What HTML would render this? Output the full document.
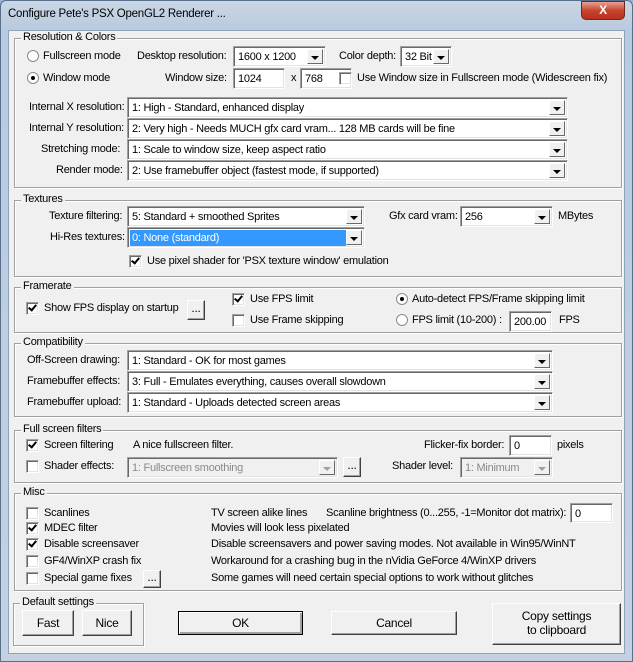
<!DOCTYPE html>
<html><head><meta charset="utf-8"><style>
*{box-sizing:border-box;margin:0;padding:0}
body{width:633px;height:662px;overflow:hidden;background:#9fb4cc;font-family:"Liberation Sans",sans-serif;font-size:11px;letter-spacing:-0.25px;color:#000;position:relative}
.a{position:absolute;white-space:nowrap}
#frame{position:absolute;left:0;top:0;width:633px;height:662px;background:linear-gradient(#c9d6e5,#b9cadf 30px,#c3d1e2);border:1px solid #58708c;border-radius:6px 6px 0 0}
#client{position:absolute;left:8px;top:30px;width:617px;height:624px;background:#f0f0f0;border:1px solid #8ea2ba}
.title{left:8px;top:8px;font-size:11.5px;color:#000}
.close{left:581px;top:1px;width:44px;height:19px;border-radius:0 0 5px 5px;background:linear-gradient(#e8a193,#c7452f 50%,#b8301c);border:1px solid #6b2a22;color:#fff;font-weight:bold;text-align:center;font-size:12px;line-height:17px}
.g{position:absolute;border:1px solid #a0a0a0;box-shadow:1px 1px 0 #fff inset,1px 1px 0 #fff}
.gl{position:absolute;background:#f0f0f0;padding:0 2px;top:-8px;left:6px;white-space:nowrap}
.cb{position:absolute;background:#fff;border:1px solid;border-color:#a0a0a0 #fff #fff #a0a0a0;box-shadow:inset 1px 1px 0 #696969,inset -1px -1px 0 #e3e3e3;padding:4px 0 0 4px;white-space:nowrap;overflow:hidden}
.cb.dis{background:#f0f0f0;color:#8a8a8a}
.cb.sel span{background:#3399ff;color:#fff;display:block;margin:-2px 18px 0 -2px;padding:2px 0 0 2px;height:16px}
.dd{position:absolute;right:2px;top:2px;bottom:2px;width:16px;background:#f0f0f0;border:1px solid;border-color:#fff #696969 #696969 #fff}
.dd:after{content:"";position:absolute;left:3px;top:6px;border:4px solid transparent;border-top:4px solid #000;border-bottom:0}
.dis .dd:after{border-top-color:#a0a0a0}
.ck{position:absolute;width:13px;height:13px;background:#fff;border:1px solid;border-color:#a0a0a0 #fff #fff #a0a0a0;box-shadow:inset 1px 1px 0 #696969,inset -1px -1px 0 #e3e3e3}
.ck.on:after{content:"";position:absolute;left:3px;top:0px;width:3px;height:6px;border-right:2px solid #000;border-bottom:2px solid #000;transform:rotate(40deg)}
.rd{position:absolute;width:12px;height:12px;border-radius:50%;background:#fff;border:1px solid #8a8a8a}
.rd.on:after{content:"";position:absolute;left:3px;top:3px;width:4px;height:4px;border-radius:50%;background:#000}
.bt{position:absolute;background:#f0f0f0;border:1px solid;border-color:#fff #404040 #404040 #fff;box-shadow:inset -1px -1px 0 #a0a0a0;text-align:center;font-size:12px}
.bt.def{border:1px solid #000;box-shadow:inset 1px 1px 0 #fff,inset -2px -2px 0 #a0a0a0}
</style></head><body>
<div id="frame"></div>
<div class="a title">Configure Pete's PSX OpenGL2 Renderer ...</div>
<div class="a close">X</div>
<div id="client"></div>

<div class="g" style="left:14px;top:38px;width:608px;height:150px"><div class="gl">Resolution &amp; Colors</div></div>
<div class="rd" style="left:27px;top:50px"></div><div class="a" style="left:43px;top:50px">Fullscreen mode</div>
<div class="a" style="left:137px;top:50px">Desktop resolution:</div>
<div class="cb" style="left:233px;top:46px;width:93px;height:21px">1600 x 1200<div class="dd"></div></div>
<div class="a" style="left:339px;top:50px">Color depth:</div>
<div class="cb" style="left:400px;top:46px;width:52px;height:21px">32 Bit<div class="dd"></div></div>
<div class="rd on" style="left:27px;top:72px"></div><div class="a" style="left:43px;top:72px">Window mode</div>
<div class="a" style="left:165px;top:72px">Window size:</div>
<div class="cb" style="left:233px;top:68px;width:52px;height:21px">1024</div>
<div class="a" style="left:291px;top:72px">x</div>
<div class="cb" style="left:300px;top:68px;width:52px;height:21px">768</div>
<div class="ck" style="left:339px;top:72px"></div><div class="a" style="left:357px;top:72px">Use Window size in Fullscreen mode (Widescreen fix)</div>

<div class="a" style="left:29px;top:101px">Internal X resolution:</div>
<div class="cb" style="left:127px;top:97px;width:441px;height:21px">1: High - Standard, enhanced display<div class="dd"></div></div>
<div class="a" style="left:29px;top:122px">Internal Y resolution:</div>
<div class="cb" style="left:127px;top:118px;width:441px;height:21px">2: Very high - Needs MUCH gfx card vram... 128 MB cards will be fine<div class="dd"></div></div>
<div class="a" style="left:41px;top:143px">Stretching mode:</div>
<div class="cb" style="left:127px;top:139px;width:441px;height:21px">1: Scale to window size, keep aspect ratio<div class="dd"></div></div>
<div class="a" style="left:56px;top:164px">Render mode:</div>
<div class="cb" style="left:127px;top:160px;width:441px;height:21px">2: Use framebuffer object (fastest mode, if supported)<div class="dd"></div></div>

<div class="g" style="left:14px;top:200px;width:608px;height:77px"><div class="gl">Textures</div></div>
<div class="a" style="left:49px;top:210px">Texture filtering:</div>
<div class="cb" style="left:127px;top:206px;width:238px;height:21px">5: Standard + smoothed Sprites<div class="dd"></div></div>
<div class="a" style="left:389px;top:210px">Gfx card vram:</div>
<div class="cb" style="left:460px;top:206px;width:93px;height:21px">256<div class="dd"></div></div>
<div class="a" style="left:558px;top:210px">MBytes</div>
<div class="a" style="left:50px;top:231px">Hi-Res textures:</div>
<div class="cb sel" style="left:127px;top:227px;width:238px;height:21px"><span>0: None (standard)</span><div class="dd"></div></div>
<div class="ck on" style="left:129px;top:255px"></div><div class="a" style="left:147px;top:255px">Use pixel shader for 'PSX texture window' emulation</div>

<div class="g" style="left:14px;top:287px;width:608px;height:46px"><div class="gl">Framerate</div></div>
<div class="ck on" style="left:26px;top:302px"></div><div class="a" style="left:44px;top:302px">Show FPS display on startup</div>
<div class="bt" style="left:187px;top:300px;width:18px;height:20px;line-height:14px">...</div>
<div class="ck on" style="left:232px;top:293px"></div><div class="a" style="left:250px;top:293px">Use FPS limit</div>
<div class="ck" style="left:232px;top:314px"></div><div class="a" style="left:250px;top:314px">Use Frame skipping</div>
<div class="rd on" style="left:396px;top:293px"></div><div class="a" style="left:412px;top:293px">Auto-detect FPS/Frame skipping limit</div>
<div class="rd" style="left:396px;top:314px"></div><div class="a" style="left:412px;top:314px">FPS limit (10-200) :</div>
<div class="cb" style="left:509px;top:311px;width:43px;height:21px">200.00</div>
<div class="a" style="left:559px;top:314px">FPS</div>

<div class="g" style="left:14px;top:343px;width:608px;height:74px"><div class="gl">Compatibility</div></div>
<div class="a" style="left:27px;top:354px">Off-Screen drawing:</div>
<div class="cb" style="left:127px;top:350px;width:426px;height:21px">1: Standard - OK for most games<div class="dd"></div></div>
<div class="a" style="left:27px;top:375px">Framebuffer effects:</div>
<div class="cb" style="left:127px;top:371px;width:426px;height:21px">3: Full - Emulates everything, causes overall slowdown<div class="dd"></div></div>
<div class="a" style="left:27px;top:396px">Framebuffer upload:</div>
<div class="cb" style="left:127px;top:392px;width:426px;height:21px">1: Standard - Uploads detected screen areas<div class="dd"></div></div>

<div class="g" style="left:14px;top:430px;width:608px;height:53px"><div class="gl">Full screen filters</div></div>
<div class="ck on" style="left:26px;top:439px"></div><div class="a" style="left:44px;top:439px">Screen filtering</div>
<div class="a" style="left:133px;top:439px">A nice fullscreen filter.</div>
<div class="a" style="left:424px;top:439px">Flicker-fix border:</div>
<div class="cb" style="left:509px;top:435px;width:43px;height:21px">0</div>
<div class="a" style="left:557px;top:439px">pixels</div>
<div class="ck" style="left:26px;top:460px"></div><div class="a" style="left:44px;top:460px">Shader effects:</div>
<div class="cb dis" style="left:127px;top:457px;width:211px;height:21px">1: Fullscreen smoothing<div class="dd"></div></div>
<div class="bt" style="left:343px;top:457px;width:18px;height:20px;line-height:14px">...</div>
<div class="a" style="left:392px;top:460px">Shader level:</div>
<div class="cb dis" style="left:460px;top:457px;width:93px;height:21px">1: Minimum<div class="dd"></div></div>

<div class="g" style="left:14px;top:493px;width:608px;height:98px"><div class="gl">Misc</div></div>
<div class="ck" style="left:26px;top:507px"></div><div class="a" style="left:44px;top:507px">Scanlines</div>
<div class="a" style="left:211px;top:507px">TV screen alike lines</div>
<div class="a" style="left:326px;top:507px">Scanline brightness (0...255, -1=Monitor dot matrix):</div>
<div class="cb" style="left:570px;top:503px;width:43px;height:20px">0</div>
<div class="ck on" style="left:26px;top:522px"></div><div class="a" style="left:44px;top:522px">MDEC filter</div>
<div class="a" style="left:211px;top:522px">Movies will look less pixelated</div>
<div class="ck on" style="left:26px;top:538px"></div><div class="a" style="left:44px;top:538px">Disable screensaver</div>
<div class="a" style="left:211px;top:538px">Disable screensavers and power saving modes. Not available in Win95/WinNT</div>
<div class="ck" style="left:26px;top:555px"></div><div class="a" style="left:44px;top:555px">GF4/WinXP crash fix</div>
<div class="a" style="left:211px;top:555px">Workaround for a crashing bug in the nVidia GeForce 4/WinXP drivers</div>
<div class="ck" style="left:26px;top:572px"></div><div class="a" style="left:44px;top:572px">Special game fixes</div>
<div class="bt" style="left:143px;top:570px;width:18px;height:18px;line-height:12px">...</div>
<div class="a" style="left:211px;top:572px">Some games will need certain special options to work without glitches</div>

<div class="g" style="left:13px;top:603px;width:131px;height:43px"><div class="gl">Default settings</div></div>
<div class="bt" style="left:22px;top:610px;width:52px;height:26px;line-height:24px">Fast</div>
<div class="bt" style="left:82px;top:610px;width:50px;height:26px;line-height:24px">Nice</div>
<div class="bt def" style="left:178px;top:611px;width:125px;height:24px;line-height:22px">OK</div>
<div class="bt" style="left:331px;top:611px;width:126px;height:24px;line-height:22px">Cancel</div>
<div class="bt" style="left:492px;top:603px;width:129px;height:42px;line-height:14px;padding-top:5px">Copy settings<br>to clipboard</div>
</body></html>
